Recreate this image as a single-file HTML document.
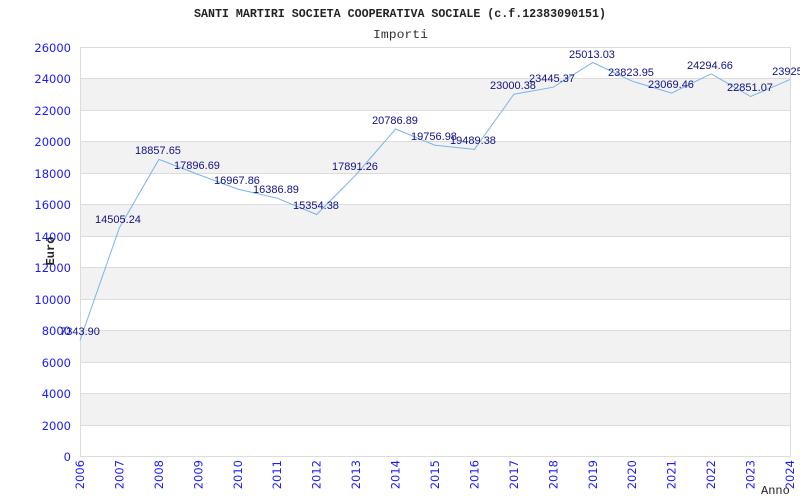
<!DOCTYPE html>
<html><head><meta charset="utf-8"><style>html,body{margin:0;padding:0;background:#fff}svg{display:block}</style></head><body>
<svg width="800" height="500" xmlns="http://www.w3.org/2000/svg">
<rect width="800" height="500" fill="#fff"/>
<g fill="#f2f2f2">
<rect x="80" y="78.5" width="710" height="31.5"/>
<rect x="80" y="141.5" width="710" height="31.5"/>
<rect x="80" y="204.5" width="710" height="31.5"/>
<rect x="80" y="267.5" width="710" height="31.5"/>
<rect x="80" y="330.5" width="710" height="31.5"/>
<rect x="80" y="393.5" width="710" height="31.5"/>
</g>
<g stroke="#dcdcdc" stroke-width="1">
<line x1="80" y1="47.5" x2="790" y2="47.5"/><line x1="80" y1="78.5" x2="790" y2="78.5"/><line x1="80" y1="110.5" x2="790" y2="110.5"/><line x1="80" y1="141.5" x2="790" y2="141.5"/><line x1="80" y1="173.5" x2="790" y2="173.5"/><line x1="80" y1="204.5" x2="790" y2="204.5"/><line x1="80" y1="236.5" x2="790" y2="236.5"/><line x1="80" y1="267.5" x2="790" y2="267.5"/><line x1="80" y1="299.5" x2="790" y2="299.5"/><line x1="80" y1="330.5" x2="790" y2="330.5"/><line x1="80" y1="362.5" x2="790" y2="362.5"/><line x1="80" y1="393.5" x2="790" y2="393.5"/><line x1="80" y1="425.5" x2="790" y2="425.5"/><line x1="80" y1="456.5" x2="790" y2="456.5"/>
<line x1="80.5" y1="47" x2="80.5" y2="457"/><line x1="790.5" y1="47" x2="790.5" y2="457"/>
</g>
<g font-family="'Liberation Mono',monospace" font-size="12" fill="#222">
<text x="194" y="17" font-weight="bold" textLength="412" lengthAdjust="spacingAndGlyphs">SANTI MARTIRI SOCIETA COOPERATIVA SOCIALE (c.f.12383090151)</text>
<text x="373" y="38" fill="#333" textLength="55" lengthAdjust="spacingAndGlyphs">Importi</text>
</g>
<g font-family="'DejaVu Sans',sans-serif" font-size="11.5" fill="#1a1aff" text-anchor="end">
<text x="71" y="52">26000</text><text x="71" y="83">24000</text><text x="71" y="115">22000</text><text x="71" y="146">20000</text><text x="71" y="178">18000</text><text x="71" y="209">16000</text><text x="71" y="241">14000</text><text x="71" y="272">12000</text><text x="71" y="304">10000</text><text x="71" y="335">8000</text><text x="71" y="367">6000</text><text x="71" y="398">4000</text><text x="71" y="430">2000</text><text x="71" y="461">0</text>
</g>
<g font-family="'DejaVu Sans',sans-serif" font-size="11.5" fill="#1a1aff" text-anchor="end">
<text transform="translate(84,460) rotate(-90)">2006</text>
<text transform="translate(123.4,460) rotate(-90)">2007</text>
<text transform="translate(162.9,460) rotate(-90)">2008</text>
<text transform="translate(202.3,460) rotate(-90)">2009</text>
<text transform="translate(241.8,460) rotate(-90)">2010</text>
<text transform="translate(281.2,460) rotate(-90)">2011</text>
<text transform="translate(320.7,460) rotate(-90)">2012</text>
<text transform="translate(360.1,460) rotate(-90)">2013</text>
<text transform="translate(399.6,460) rotate(-90)">2014</text>
<text transform="translate(439,460) rotate(-90)">2015</text>
<text transform="translate(478.4,460) rotate(-90)">2016</text>
<text transform="translate(517.9,460) rotate(-90)">2017</text>
<text transform="translate(557.3,460) rotate(-90)">2018</text>
<text transform="translate(596.8,460) rotate(-90)">2019</text>
<text transform="translate(636.2,460) rotate(-90)">2020</text>
<text transform="translate(675.7,460) rotate(-90)">2021</text>
<text transform="translate(715.1,460) rotate(-90)">2022</text>
<text transform="translate(754.6,460) rotate(-90)">2023</text>
<text transform="translate(794,460) rotate(-90)">2024</text>
</g>
<text transform="translate(54,251) rotate(-90)" font-family="'Liberation Mono',monospace" font-weight="bold" font-size="12" fill="#222" text-anchor="middle">Euro</text>
<text x="761" y="494" font-family="'Liberation Mono',monospace" font-size="12" fill="#222">Anno</text>
<polyline fill="none" stroke="#78b4ee" stroke-width="1" points="80,340.5 119.4,227.8 158.9,159.4 198.3,174.5 237.8,189.1 277.2,198.2 316.7,214.5 356.1,174.6 395.6,129 435,145.2 474.4,149.4 513.9,94.2 553.3,87.2 592.8,62.5 632.2,81.2 671.7,93.1 711.1,73.8 750.6,96.5 790,79.6"/>
<g font-family="'Liberation Sans',sans-serif" font-size="11" fill="#10108a" text-anchor="middle">
<text x="80" y="335">7343.90</text>
<text x="118" y="223">14505.24</text>
<text x="158" y="154">18857.65</text>
<text x="197" y="169">17896.69</text>
<text x="237" y="184">16967.86</text>
<text x="276" y="193">16386.89</text>
<text x="316" y="209">15354.38</text>
<text x="355" y="170">17891.26</text>
<text x="395" y="124">20786.89</text>
<text x="434" y="140">19756.98</text>
<text x="473" y="144">19489.38</text>
<text x="513" y="89">23000.38</text>
<text x="552" y="82">23445.37</text>
<text x="592" y="58">25013.03</text>
<text x="631" y="76">23823.95</text>
<text x="671" y="88">23069.46</text>
<text x="710" y="69">24294.66</text>
<text x="750" y="91">22851.07</text>
<text x="789" y="75">23925.</text>
</g>
</svg>
</body></html>
